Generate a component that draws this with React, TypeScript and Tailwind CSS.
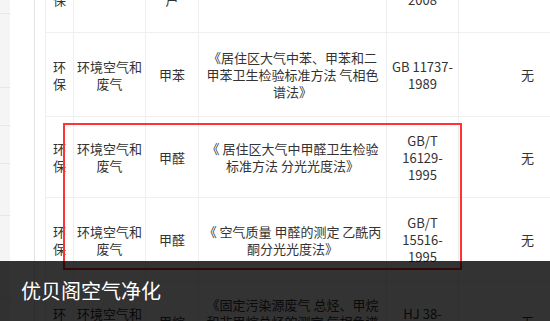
type Row = { h: string; cells: string[] };

const rows: Row[] = [
  { h: "h-[84px] -mt-[51px]", cells: ["环保", "室内空气", "生产用户", "《室内空气质量标准》", "GB 50325-2008", "无"] },
  {
    h: "h-[84px]",
    cells: ["环保", "环境空气和废气", "甲苯", "《居住区大气中苯、甲苯和二甲苯卫生检验标准方法 气相色谱法》", "GB 11737-1989", "无"],
  },
  {
    h: "h-[81px]",
    cells: ["环保", "环境空气和废气", "甲醛", "《 居住区大气中甲醛卫生检验标准方法 分光光度法》", "GB/T 16129-1995", "无"],
  },
  {
    h: "h-[84px]",
    cells: ["环保", "环境空气和废气", "甲醛", "《 空气质量 甲醛的测定 乙酰丙酮分光光度法》", "GB/T 15516-1995", "无"],
  },
  {
    h: "h-[80px]",
    cells: ["环保", "环境空气和废气", "甲烷", "《固定污染源废气 总烃、甲烷和非甲烷总烃的测定 气相色谱法》", "HJ 38-2017", "无"],
  },
];

const cellPad = ["px-[2px]", "px-[2px]", "px-[2px]", "px-[4px]", "px-[2px]", "px-[2px]"];

function TableRow({ row }: { row: Row }) {
  return (
    <div className={`grid grid-cols-[28px_72px_53px_188px_72px_138px] shrink-0 border-b border-[#efefef] ${row.h}`}>
      {row.cells.map((c, i) => (
        <div
          key={i}
          className={`flex items-center justify-center border-l border-[#efefef] text-center ${cellPad[i]}`}
        >
          <span className="block w-full">{c}</span>
        </div>
      ))}
    </div>
  );
}

export default function App() {
  return (
    <div className="relative flex h-[321px] w-[550px] overflow-hidden bg-white font-['Noto_Sans_CJK_SC','Noto_Sans',sans-serif] text-[13px] leading-[17px] text-[#333]">
      {/* left list strip */}
      <div className="flex w-[10px] shrink-0 flex-col bg-[#f6f5f5]">
        <div className="h-[14px] border-b border-[#e8e6e6]" />
        <div className="h-[74px] border-b border-[#e8e6e6]" />
        <div className="h-[38px] border-b border-[#e8e6e6]" />
        <div className="h-[38px] border-b border-[#e8e6e6]" />
        <div className="h-[52px] border-b border-[#e8e6e6]" />
        <div className="h-[82px] border-b border-[#e8e6e6]" />
      </div>
      <div className="w-[25px] shrink-0 border-r border-[#e3e3e3]" />
      <div className="w-[10px] shrink-0" />

      {/* table */}
      <div className="flex flex-col">
        {rows.map((r, i) => (
          <TableRow key={i} row={r} />
        ))}
      </div>

      {/* red highlight box */}
      <div className="absolute left-[63px] top-[123px] h-[147px] w-[399px] border-2 border-[#f33]" />

      {/* caption bar */}
      <div className="absolute bottom-0 left-0 right-0 flex h-[60px] items-center bg-black/80 px-[21px] text-[20px] leading-none text-white">
        优贝阁空气净化
      </div>
    </div>
  );
}
